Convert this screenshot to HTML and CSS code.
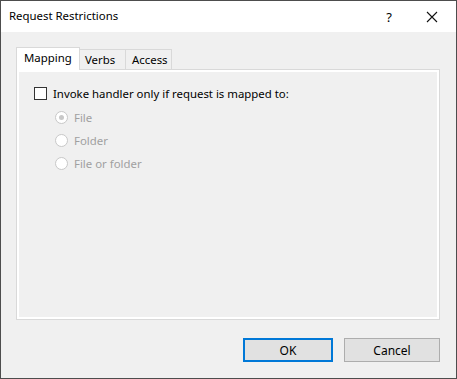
FILE: index.html
```html
<!DOCTYPE html>
<html lang="en">
<head>
  <meta charset="UTF-8">
  <title>Request Restrictions</title>
  <link rel="stylesheet" href="styles.css">
</head>
<body>
  <div class="dialog">
    <div class="titlebar">
      <span class="title">Request Restrictions</span>
      <span class="help">?</span>
      <span class="close">
        <svg width="12" height="12" viewBox="0 0 12 12"><path d="M1 1L11 11M11 1L1 11" stroke="#111" stroke-width="1.1" fill="none"/></svg>
      </span>
    </div>

    <div class="content">
      <div class="tabs">
        <div class="tab active">Mapping</div>
        <div class="tab">Verbs</div>
        <div class="tab">Access</div>
      </div>
      <div class="panel">
        <label class="check">
          <span class="box"></span>
          Invoke handler only if request is mapped to:
        </label>
        <div class="radios">
          <div class="radio"><span class="dot checked"></span>File</div>
          <div class="radio"><span class="dot"></span>Folder</div>
          <div class="radio"><span class="dot"></span>File or folder</div>
        </div>
      </div>
      <div class="buttons">
        <button class="btn default">OK</button>
        <button class="btn">Cancel</button>
      </div>
    </div>
  </div>
</body>
</html>
```

FILE: styles.css
```css
html, body { margin: 0; padding: 0; }
body { font-family: "Noto Sans", "Open Sans", sans-serif; font-size: 11.4px; color: #000; }

.dialog { width: 455px; height: 377px; border: 1px solid #4d4d4d; background: #f0f0f0; display: flex; flex-direction: column; }

.titlebar { height: 31px; background: #fff; display: flex; align-items: center; }
.title { flex: 1; padding-left: 8px; padding-bottom: 2px; }
.help { width: 20px; text-align: center; margin-right: 27px; font-size: 13px; }
.close { width: 16px; margin-right: 14px; display: flex; }

.content { flex: 1; display: flex; flex-direction: column; padding: 15px 16px 0 15px; }

.tabs { display: flex; align-items: flex-end; height: 22px; }
.tab { height: 20px; line-height: 19px; box-sizing: border-box; border: 1px solid #d9d9d9; border-bottom: none; padding: 0 6px 0 6px; margin-left: -1px; }
.tab:first-child { margin-left: 0; }
.tab.active { width: 64px; height: 23px; line-height: 20px; background: #fff; padding: 0 7px; position: relative; z-index: 1; margin-bottom: -1px; }
.tab:nth-child(2) { width: 47px; padding-left: 5px; }
.tab:nth-child(3) { width: 47px; padding-left: 6px; }

.panel { height: 251px; box-sizing: border-box; border: 1px solid #d9d9d9; box-shadow: inset 0 0 0 2px #fff; background: #f0f0f0; padding: 15px 0 0 17px; }

.check { display: flex; align-items: center; height: 16px; }
.box { width: 11px; height: 11px; border: 1px solid #333; background: #fff; margin-right: 6px; }

.radios { padding-left: 21px; padding-top: 5px; color: #a0a0a0; }
.radio { display: flex; align-items: center; height: 23px; }
.dot { width: 11px; height: 11px; border: 1px solid #c8c8c8; border-radius: 50%; background: #fff; margin-right: 6px; position: relative; }
.dot.checked::after { content: ""; position: absolute; left: 3px; top: 3px; width: 5px; height: 5px; border-radius: 50%; background: #c8c8c8; }

.buttons { display: flex; justify-content: flex-end; gap: 11px; padding-top: 18px; padding-right: 0; }
.btn { font-family: inherit; font-size: 12px; height: 24px; width: 96px; background: #e1e1e1; border: 1px solid #adadad; padding: 0; color: #000; }
.btn.default { width: 90px; border: 2px solid #0078d7; }
```
